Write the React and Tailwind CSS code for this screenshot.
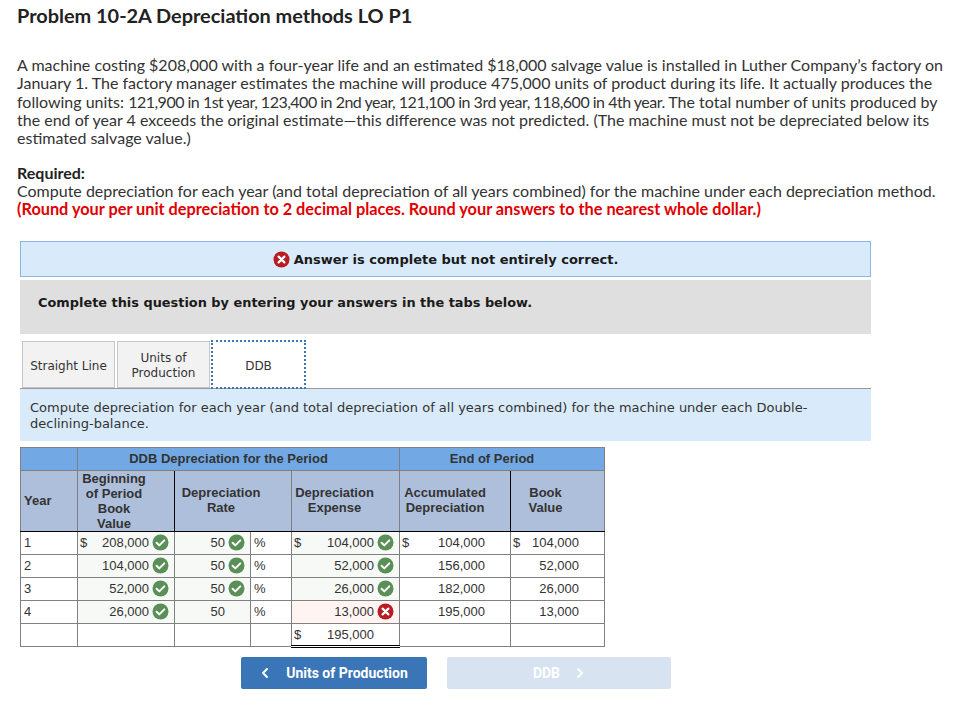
import { ChevronLeft, ChevronRight } from 'lucide-react'

const BODY = { fontFamily: 'Lato, sans-serif' }

function CheckIcon() {
  return (
    <svg width="17" height="17" viewBox="0 0 17 17" className="shrink-0">
      <circle cx="8.5" cy="8.5" r="8" fill="#5b8f58" />
      <path d="M4.6 8.8l2.7 2.6 5-5" fill="none" stroke="#fff" strokeWidth="2" strokeLinecap="round" strokeLinejoin="round" />
    </svg>
  )
}

function CrossIcon({ size = 17 }) {
  return (
    <svg width={size} height={size} viewBox="0 0 17 17" className="shrink-0">
      <circle cx="8.5" cy="8.5" r="8" fill="#b81c22" />
      <path d="M5.6 5.6l5.8 5.8M11.4 5.6l-5.8 5.8" fill="none" stroke="#fff" strokeWidth="2.2" strokeLinecap="round" />
    </svg>
  )
}

function Mark({ type }) {
  if (type === 'ok') return <CheckIcon />
  if (type === 'bad') return <CrossIcon />
  return <span className="w-[17px] shrink-0" />
}

// money cell: optional $ on the left, number right aligned, room for a mark
function Money({ value, dollar, mark, tone = '', pr = 'pr-[5px]', extra = '' }) {
  return (
    <td className={`border border-[#808080] p-0 ${tone} ${extra}`}>
      <div className={`flex items-center pb-[1px] pl-[2px] ${pr}`}>
        {dollar && <span>$</span>}
        <span className="flex-1 pr-[3px] text-right">{value}</span>
        {mark !== undefined && <Mark type={mark} />}
      </div>
    </td>
  )
}

const GREEN = 'bg-[#f6f9f5]'
const RED = 'bg-[#fff4f2]'

const ROWS = [
  { year: 1, begin: '208,000', rateOk: true, exp: '104,000', expOk: true, acc: '104,000', book: '104,000', dollar: true },
  { year: 2, begin: '104,000', rateOk: true, exp: '52,000', expOk: true, acc: '156,000', book: '52,000' },
  { year: 3, begin: '52,000', rateOk: true, exp: '26,000', expOk: true, acc: '182,000', book: '26,000' },
  { year: 4, begin: '26,000', rateOk: false, exp: '13,000', expOk: false, acc: '195,000', book: '13,000' },
]

function DepreciationTable() {
  return (
    <table
      className="ml-[20px] mt-[6px] w-[584px] table-fixed border-collapse text-[13px] leading-[15px] text-[#333]"
      style={{ fontFamily: '"Liberation Sans", Arial, sans-serif' }}
    >
      <colgroup>
        <col className="w-[57px]" />
        <col className="w-[97px]" />
        <col className="w-[76px]" />
        <col className="w-[41px]" />
        <col className="w-[108px]" />
        <col className="w-[111px]" />
        <col className="w-[94px]" />
      </colgroup>
      <thead>
        <tr className="h-[23px] bg-[#72a9e4]">
          <th className="border border-[#808080]" />
          <th colSpan={4} className="border border-[#808080] border-l-black pb-[2px] pr-[20px] font-bold">DDB Depreciation for the Period</th>
          <th colSpan={2} className="border border-[#808080] border-l-black pb-[2px] pr-[20px] font-bold">End of Period</th>
        </tr>
        <tr className="h-[61px] bg-[#aebfdb]">
          <th className="border border-[#808080] border-b-black pb-[2px] pl-[3px] text-left font-bold">Year</th>
          <th className="border border-[#808080] border-x-black border-b-black pr-[24px] font-bold">Beginning<br />of Period<br />Book<br />Value</th>
          <th colSpan={2} className="border border-[#808080] border-b-black pb-[2px] pr-[24px] font-bold">Depreciation<br />Rate</th>
          <th className="border border-[#808080] border-b-black pb-[2px] pr-[22px] font-bold">Depreciation<br />Expense</th>
          <th className="border border-[#808080] border-x-black border-b-black pb-[2px] pr-[20px] font-bold">Accumulated<br />Depreciation</th>
          <th className="border border-[#808080] border-b-black pb-[2px] pr-[24px] font-bold">Book<br />Value</th>
        </tr>
      </thead>
      <tbody>
        {ROWS.map((r) => (
          <tr key={r.year} className="h-[23px]">
            <td className="border border-[#808080] pb-[1px] pl-[3px]">{r.year}</td>
            <Money value={r.begin} dollar={r.dollar} mark="ok" tone={GREEN} />
            <Money value="50" mark={r.rateOk ? 'ok' : null} tone={GREEN} />
            <td className="border border-[#808080] pb-[1px] pl-[3px]">%</td>
            <Money value={r.exp} dollar={r.dollar} mark={r.expOk ? 'ok' : 'bad'} tone={r.expOk ? GREEN : RED} />
            <Money value={r.acc} dollar={r.dollar} pr="pr-[22px]" />
            <Money value={r.book} dollar={r.dollar} pr="pr-[22px]" />
          </tr>
        ))}
        <tr className="h-[23px]">
          <td className="border border-[#808080]" />
          <td className="border border-[#808080]" />
          <td className="border border-[#808080]" />
          <td className="border border-[#808080]" />
          <Money value="195,000" dollar pr="pr-[22px]" extra="border-t-black border-b-[3px] border-b-black [border-bottom-style:double]" />
          <td className="border border-[#808080]" />
          <td className="border border-[#808080]" />
        </tr>
      </tbody>
    </table>
  )
}

function Tab({ children, active }) {
  return (
    <div
      className={`flex h-[47px] w-[93px] items-center justify-center pt-[3px] text-center text-[12px] leading-[15px] ${
        active ? 'bg-white outline-2 outline-dotted outline-[#3a75b8] -outline-offset-1' : 'border border-[#c6c6c6] bg-[#f2f2f2]'
      }`}
    >
      <span>{children}</span>
    </div>
  )
}

export default function App() {
  return (
    <div className="min-h-[706px] bg-white text-[#222]">
      <div style={BODY} className="whitespace-nowrap pl-[17px] pt-[3px] pr-[10px]">
        <h1 className="text-[19.9px] font-bold leading-[24px]">Problem 10-2A Depreciation methods LO P1</h1>
        <p className="mt-[29px] text-[16px] leading-[18.3px] text-[#333]">
          A machine costing $208,000 with a four-year life and an estimated $18,000 salvage value is installed in Luther Company’s factory on<br />
          January 1. The factory manager estimates the machine will produce 475,000 units of product during its life. It actually produces the<br />
          following units: <span className="tracking-[-0.5px]">121,900 in 1st year, 123,400 in 2nd year, 121,100 in 3rd year, 118,600 in 4th year.</span> The total number of units produced by<br />
          the end of year 4 exceeds the original estimate—this difference was not predicted. (The machine must not be depreciated below its<br />
          estimated salvage value.)
        </p>
        <p className="mt-[17px] text-[16px] font-bold leading-[18px]">Required:</p>
        <p className="text-[16px] leading-[18px] text-[#333]">
          Compute depreciation for each year (and total depreciation of all years combined) for the machine under each depreciation method.
        </p>
        <p className="text-[16.3px] font-bold leading-[18px] text-[#e00000]">
          (Round your per unit depreciation to 2 decimal places. Round your answers to the nearest whole dollar.)
        </p>
      </div>

      <div style={{ fontFamily: '"DejaVu Sans", Verdana, sans-serif' }}>
        <div className="ml-[20px] mt-[23px] flex h-[36px] w-[851px] items-center justify-center gap-[4px] border border-[#8ab7e3] bg-[#d9ebfa] text-[13px] font-bold text-[#1a1a1a]">
          <CrossIcon />
          <span>Answer is complete but not entirely correct.</span>
        </div>
        <div className="ml-[20px] mt-[3px] h-[54px] w-[851px] bg-[#dfdfdf] pl-[18px] pt-[14px] text-[12.9px] font-bold leading-[18px] text-[#1a1a1a]">
          Complete this question by entering your answers in the tabs below.
        </div>
        <div className="ml-[20px] mt-[7px] w-[851px] border-b border-[#999] pl-[2px] text-[#333]">
          <div className="flex gap-[2px]">
            <Tab>Straight Line</Tab>
            <Tab>Units of<br />Production</Tab>
            <Tab active>DDB</Tab>
          </div>
        </div>
        <div className="ml-[20px] h-[52px] w-[851px] bg-[#d9ebfa] pl-[10px] pt-[11px] text-[13px] leading-[16px] text-[#333]">
          Compute depreciation for each year (and total depreciation of all years combined) for the machine under each Double-<br />
          declining-balance.
        </div>
      </div>

      <DepreciationTable />

      <div className="ml-[241px] mt-[9px] flex gap-[20px] text-[14px] font-bold text-white" style={{ fontFamily: 'Roboto, sans-serif' }}>
        <div className="flex h-[32px] w-[186px] items-center justify-center gap-[13px] rounded-[2px] bg-[#3a75b8] pr-[3px]">
          <ChevronLeft size={16} strokeWidth={3} />
          <span>Units of Production</span>
        </div>
        <div className="flex h-[32px] w-[224px] items-center justify-center gap-[12px] rounded-[2px] bg-[#d7e3f1] pl-[3px]">
          <span>DDB</span>
          <ChevronRight size={16} strokeWidth={3} />
        </div>
      </div>
    </div>
  )
}
